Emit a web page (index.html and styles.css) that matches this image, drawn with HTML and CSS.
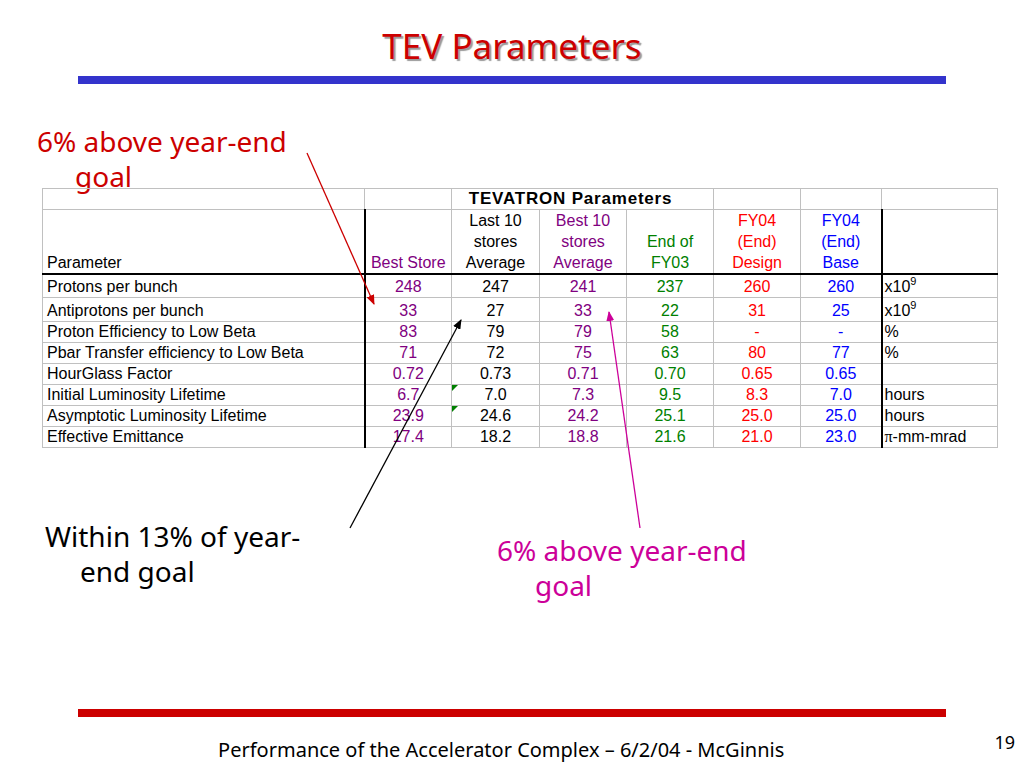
FILE: index.html
```html
<!DOCTYPE html>
<html lang="en">
<head>
<meta charset="utf-8">
<title>TEV Parameters</title>
<link rel="stylesheet" href="styles.css">
</head>
<body>
<div class="slide">
  <h1 class="title">TEV Parameters</h1>
  <div class="bar bar-blue"></div>

  <p class="note note-red">6% above year-end<br><span class="indent">goal</span></p>

  <table class="params">
    <colgroup>
      <col class="c-param"><col class="c-num"><col class="c-num2"><col class="c-num"><col class="c-num"><col class="c-num"><col class="c-base"><col class="c-unit">
    </colgroup>
    <tr class="r-top">
      <td></td><td></td>
      <td colspan="3" class="caption">TEVATRON Parameters</td>
      <td></td><td></td><td></td>
    </tr>
    <tr class="r-head">
      <td class="left">Parameter</td>
      <td class="sep purple">Best Store</td>
      <td>Last 10<br>stores<br>Average</td>
      <td class="purple">Best 10<br>stores<br>Average</td>
      <td class="green">End of<br>FY03</td>
      <td class="red">FY04<br>(End)<br>Design</td>
      <td class="blue">FY04<br>(End)<br>Base</td>
      <td class="sep"></td>
    </tr>
    <tr class="r-tall">
      <td class="left">Protons per bunch</td>
      <td class="sep purple">248</td><td>247</td><td class="purple">241</td><td class="green">237</td><td class="red">260</td><td class="blue">260</td>
      <td class="sep unit">x10<sup>9</sup></td>
    </tr>
    <tr class="r-tall2">
      <td class="left">Antiprotons per bunch</td>
      <td class="sep purple">33</td><td>27</td><td class="purple">33</td><td class="green">22</td><td class="red">31</td><td class="blue">25</td>
      <td class="sep unit">x10<sup>9</sup></td>
    </tr>
    <tr>
      <td class="left">Proton Efficiency to Low Beta</td>
      <td class="sep purple">83</td><td>79</td><td class="purple">79</td><td class="green">58</td><td class="red">-</td><td class="blue">-</td>
      <td class="sep unit">%</td>
    </tr>
    <tr>
      <td class="left">Pbar Transfer efficiency to Low Beta</td>
      <td class="sep purple">71</td><td>72</td><td class="purple">75</td><td class="green">63</td><td class="red">80</td><td class="blue">77</td>
      <td class="sep unit">%</td>
    </tr>
    <tr>
      <td class="left">HourGlass Factor</td>
      <td class="sep purple">0.72</td><td>0.73</td><td class="purple">0.71</td><td class="green">0.70</td><td class="red">0.65</td><td class="blue">0.65</td>
      <td class="sep unit"></td>
    </tr>
    <tr>
      <td class="left">Initial Luminosity Lifetime</td>
      <td class="sep purple">6.7</td><td class="flag">7.0</td><td class="purple">7.3</td><td class="green">9.5</td><td class="red">8.3</td><td class="blue">7.0</td>
      <td class="sep unit">hours</td>
    </tr>
    <tr>
      <td class="left">Asymptotic Luminosity Lifetime</td>
      <td class="sep purple">23.9</td><td class="flag">24.6</td><td class="purple">24.2</td><td class="green">25.1</td><td class="red">25.0</td><td class="blue">25.0</td>
      <td class="sep unit">hours</td>
    </tr>
    <tr>
      <td class="left">Effective Emittance</td>
      <td class="sep purple">17.4</td><td>18.2</td><td class="purple">18.8</td><td class="green">21.6</td><td class="red">21.0</td><td class="blue">23.0</td>
      <td class="sep unit"><span class="pi">π</span>-mm-mrad</td>
    </tr>
  </table>

  <div class="notes-row">
    <p class="note note-black">Within 13% of year-<br><span class="indent-b">end goal</span></p>
    <p class="note note-magenta">6% above year-end<br><span class="indent">goal</span></p>
  </div>

  <div class="bar bar-red"></div>
  <footer class="footer">
    <span class="footer-text">Performance of the Accelerator Complex – 6/2/04 - McGinnis</span>
    <span class="page-num">19</span>
  </footer>

  <svg class="arrows" width="1024" height="768" viewBox="0 0 1024 768">
    <defs>
      <marker id="ah-red" markerWidth="10" markerHeight="8" refX="9" refY="4" orient="auto" markerUnits="userSpaceOnUse">
        <path d="M0,0 L10,4 L0,8 Z" fill="#cc0000"/>
      </marker>
      <marker id="ah-black" markerWidth="10" markerHeight="8" refX="9" refY="4" orient="auto" markerUnits="userSpaceOnUse">
        <path d="M0,0 L10,4 L0,8 Z" fill="#000"/>
      </marker>
      <marker id="ah-mag" markerWidth="10" markerHeight="8" refX="9" refY="4" orient="auto" markerUnits="userSpaceOnUse">
        <path d="M0,0 L10,4 L0,8 Z" fill="#cc0099"/>
      </marker>
    </defs>
    <line x1="307" y1="153" x2="374" y2="304" stroke="#cc0000" stroke-width="1.3" marker-end="url(#ah-red)"/>
    <line x1="350" y1="528" x2="461" y2="320" stroke="#000" stroke-width="1.3" marker-end="url(#ah-black)"/>
    <line x1="640" y1="528" x2="609" y2="312" stroke="#cc0099" stroke-width="1.3" marker-end="url(#ah-mag)"/>
  </svg>
</div>
</body>
</html>
```

FILE: styles.css
```css
html, body {
  margin: 0;
  padding: 0;
  background: #ffffff;
}

.slide {
  position: relative;
  width: 1024px;
  height: 768px;
  overflow: hidden;
  display: flex;
  flex-direction: column;
  font-family: "Noto Sans", "DejaVu Sans", sans-serif;
}

.title {
  margin: 24px 0 0 0;
  height: 44px;
  line-height: 44px;
  font-size: 35px;
  font-weight: normal;
  color: #cc0000;
  text-align: center;
  text-shadow: 2px 2px 1px #9a9a9a;
}

.bar {
  height: 8px;
  margin: 0 78px;
}

.bar-blue {
  margin-top: 8px;
  background: #3333cc;
}

.bar-red {
  margin-top: auto;
  background: #cc0000;
}

.note {
  margin: 0;
  font-size: 28px;
  line-height: 35px;
  white-space: nowrap;
}

.note-red {
  color: #cc0000;
  margin: 40px 0 -6px 37px;
}

.indent {
  padding-left: 38px;
}

.indent-b {
  padding-left: 35px;
}

.params {
  margin-left: 42px;
  width: 955px;
  table-layout: fixed;
  border-collapse: collapse;
  font-family: "Liberation Sans", Arial, sans-serif;
  font-size: 16px;
  color: #000;
}

.c-param { width: 322px; }
.c-num { width: 87px; }
.c-num2 { width: 88px; }
.c-base { width: 81px; }
.c-unit { width: 116px; }

.params td {
  border: 1px solid #c0c0c0;
  padding: 0 2px;
  text-align: center;
  vertical-align: bottom;
  line-height: 20px;
  white-space: nowrap;
  overflow: visible;
}

.params tr { height: 20px; }
.params .r-top { height: 20px; }
.params .r-head { height: 62px; }
.params .r-head td { line-height: 21px; }
.params .r-tall { height: 23px; }
.params .r-tall2 { height: 24px; }

.params .r-head td {
  border-bottom: 2px solid #000;
}

.params td.sep {
  border-left: 2px solid #000;
}

.params td.left {
  text-align: left;
  padding-left: 4px;
}

.params td.unit {
  text-align: left;
  padding-left: 2px;
}

.params td.caption {
  font-weight: bold;
  font-size: 17px;
  letter-spacing: 0.8px;
  padding-right: 26px;
}

.params sup {
  font-size: 11px;
  line-height: 0;
  vertical-align: 7px;
}

.pi {
  font-family: "Liberation Serif", "DejaVu Serif", serif;
}

.purple { color: #800080; }
.green { color: #008000; }
.red { color: #ff0000; }
.blue { color: #0000ff; }

.params td.flag {
  position: relative;
}

.params td.flag::before {
  content: "";
  position: absolute;
  top: 0;
  left: 0;
  width: 0;
  height: 0;
  border-top: 6px solid #008000;
  border-right: 6px solid transparent;
}

.notes-row {
  display: flex;
  align-items: flex-start;
  margin-top: 71px;
  padding-left: 45px;
}

.note-black {
  color: #000;
  width: 452px;
}

.note-magenta {
  color: #cc0099;
  margin-top: 14px;
}

.footer {
  height: 51px;
  display: flex;
  align-items: flex-start;
  padding-right: 9px;
}

.footer-text {
  flex: 1;
  text-align: center;
  padding-left: 8px;
  margin-top: 20px;
  font-size: 20px;
  line-height: 26px;
  color: #000;
}

.page-num {
  margin-top: 13px;
  font-size: 18px;
  line-height: 24px;
  color: #000;
}

.arrows {
  position: absolute;
  left: 0;
  top: 0;
  pointer-events: none;
}
```
